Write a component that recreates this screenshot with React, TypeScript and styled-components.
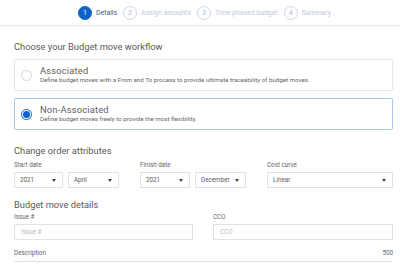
import { createGlobalStyle } from "styled-components"
import styled from "styled-components"

const GlobalStyle = createGlobalStyle`
  html, body {
    margin: 0;
    padding: 0;
    background: #ffffff;
    font-family: Roboto, "Liberation Sans", sans-serif;
    color: #4a4a4a;
  }
  * {
    box-sizing: border-box;
  }
`

const Page = styled.div`
  width: 400px;
  height: 267px;
  overflow: hidden;
`

const StepBar = styled.div`
  height: 26px;
  display: flex;
  justify-content: center;
  align-items: center;
  padding-left: 9px;
  gap: 6px;
  border-bottom: 1px solid #e8e8e8;
  box-shadow: 0 1px 2px rgba(0, 0, 0, 0.05);
`

const Step = styled.div<{ $active?: boolean }>`
  display: flex;
  align-items: center;
  gap: 4px;
  font-size: 6.9px;
  color: ${(p) => (p.$active ? "#3a5e94" : "#bccbe0")};
`

const StepNumber = styled.span<{ $active?: boolean }>`
  width: 14px;
  height: 14px;
  border-radius: 50%;
  display: flex;
  align-items: center;
  justify-content: center;
  font-size: 7px;
  background: ${(p) => (p.$active ? "#0b63c8" : "#ffffff")};
  color: ${(p) => (p.$active ? "#ffffff" : "#aabbd4")};
  border: 1px solid ${(p) => (p.$active ? "#0b63c8" : "#ccd9ec")};
`

const Content = styled.div`
  padding: 0 7px 0 14px;
`

const SectionTitle = styled.div<{ $top: number }>`
  margin-top: ${(p) => p.$top}px;
  font-size: 9.3px;
  line-height: 12px;
  color: #5a5a5a;
`

const Card = styled.div<{ $selected?: boolean; $top: number }>`
  height: 32px;
  margin-top: ${(p) => p.$top}px;
  border: 1px solid ${(p) => (p.$selected ? "#a9c7e6" : "#e6e6e6")};
  border-radius: 2px;
  display: flex;
  align-items: center;
  padding-left: 6px;
  gap: 8px;
  box-shadow: 0 0 2px rgba(0, 0, 0, 0.04);
`

const Radio = styled.span<{ $checked?: boolean }>`
  width: 11px;
  height: 11px;
  border-radius: 50%;
  flex-shrink: 0;
  border: 1px solid ${(p) => (p.$checked ? "#0b63c8" : "#d4d4d4")};
  display: flex;
  align-items: center;
  justify-content: center;
  &::after {
    content: "";
    width: 7px;
    height: 7px;
    border-radius: 50%;
    background: ${(p) => (p.$checked ? "#0b5fd0" : "transparent")};
  }
`

const CardText = styled.div`
  display: flex;
  flex-direction: column;
  margin-top: -1px;
`

const CardTitle = styled.span`
  font-size: 9.3px;
  line-height: 10px;
  letter-spacing: 0.2px;
  color: #606060;
`

const CardDesc = styled.span`
  font-size: 6.2px;
  line-height: 8px;
  color: #666;
`

const FieldRow = styled.div<{ $top: number }>`
  margin-top: ${(p) => p.$top}px;
  display: flex;
  gap: 21px;
`

const FieldGroup = styled.div<{ $width: number }>`
  width: ${(p) => p.$width}px;
  display: flex;
  flex-direction: column;
`

const Label = styled.span`
  font-size: 6.3px;
  line-height: 9px;
  height: 11px;
  color: #666;
`

const Pair = styled.div`
  display: flex;
  gap: 5px;
`

const Select = styled.div<{ $width?: number }>`
  height: 16px;
  width: ${(p) => (p.$width ? `${p.$width}px` : "100%")};
  border: 1px solid #e2e2e2;
  display: flex;
  align-items: center;
  justify-content: space-between;
  padding: 0 6px 0 5px;
  font-size: 6.3px;
  color: #5c5c5c;
  &::after {
    content: "";
    border-left: 2.5px solid transparent;
    border-right: 2.5px solid transparent;
    border-top: 3px solid #444;
  }
`

const Input = styled.div`
  height: 16px;
  border: 1px solid #e2e2e2;
  display: flex;
  align-items: center;
  padding-left: 6px;
  font-size: 6.3px;
  color: #b8b8b8;
`

const DetailRow = styled.div`
  display: grid;
  grid-template-columns: 179px 180px;
  gap: 20px;
  margin-top: 2px;
`

const DescriptionRow = styled.div`
  margin-top: 9px;
  display: flex;
  justify-content: space-between;
  padding-bottom: 3px;
  border-bottom: 1px solid #e2e2e2;
  font-size: 6.3px;
  line-height: 9px;
  color: #666;
`

const steps = ["Details", "Assign amounts", "Time phased budget", "Summary"]

export default function App() {
  return (
    <Page>
      <GlobalStyle />
      <StepBar>
        {steps.map((label, i) => (
          <Step key={label} $active={i === 0}>
            <StepNumber $active={i === 0}>{i + 1}</StepNumber>
            {label}
          </Step>
        ))}
      </StepBar>

      <Content>
        <SectionTitle $top={15}>Choose your Budget move workflow</SectionTitle>
        <Card $top={6}>
          <Radio />
          <CardText>
            <CardTitle>Associated</CardTitle>
            <CardDesc>
              Define budget moves with a From and To process to provide ultimate traceability of budget moves.
            </CardDesc>
          </CardText>
        </Card>
        <Card $selected $top={7}>
          <Radio $checked />
          <CardText>
            <CardTitle>Non-Associated</CardTitle>
            <CardDesc>Define budget moves freely to provide the most flexibility.</CardDesc>
          </CardText>
        </Card>

        <SectionTitle $top={15}>Change order attributes</SectionTitle>
        <FieldRow $top={4}>
          <FieldGroup $width={105}>
            <Label>Start date</Label>
            <Pair>
              <Select $width={49}>2021</Select>
              <Select $width={51}>April</Select>
            </Pair>
          </FieldGroup>
          <FieldGroup $width={106}>
            <Label>Finish date</Label>
            <Pair>
              <Select $width={50}>2021</Select>
              <Select $width={51}>December</Select>
            </Pair>
          </FieldGroup>
          <FieldGroup $width={126}>
            <Label>Cost curve</Label>
            <Select>Linear</Select>
          </FieldGroup>
        </FieldRow>

        <SectionTitle $top={11}>Budget move details</SectionTitle>
        <DetailRow>
          <FieldGroup $width={179}>
            <Label>Issue #</Label>
            <Input>Issue #</Input>
          </FieldGroup>
          <FieldGroup $width={180}>
            <Label>CCO</Label>
            <Input>CCO</Input>
          </FieldGroup>
        </DetailRow>
        <DescriptionRow>
          <span>Description</span>
          <span>500</span>
        </DescriptionRow>
      </Content>
    </Page>
  )
}
